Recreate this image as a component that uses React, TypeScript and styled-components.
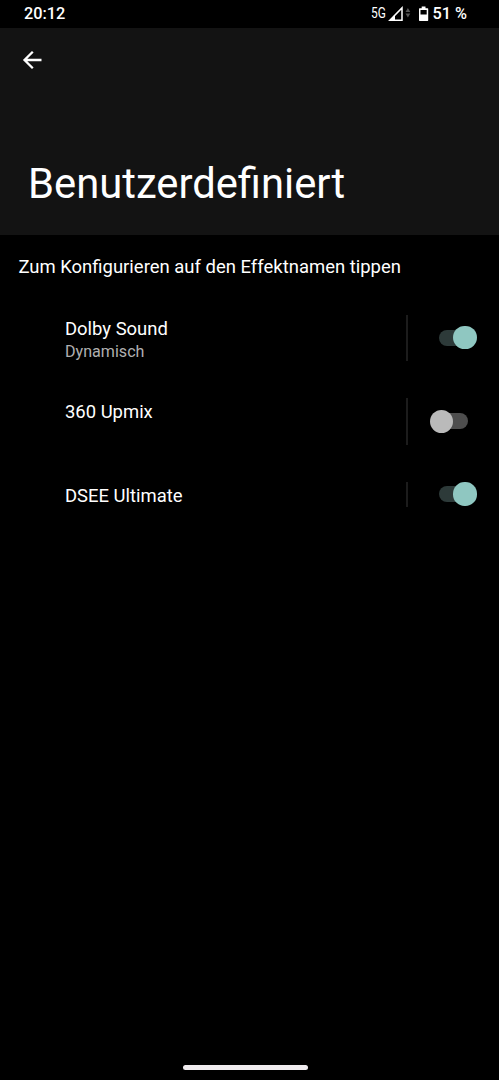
import React, { useState } from "react";
import styled, { createGlobalStyle } from "styled-components";

const GlobalStyle = createGlobalStyle`
  * { box-sizing: border-box; }
  html, body { margin: 0; background: #000; }
  body { font-family: Roboto, "Liberation Sans", sans-serif; color: #fff; }
`;

const Screen = styled.div`
  display: flex;
  flex-direction: column;
  width: 100%;
  height: 1080px;
  overflow: hidden;
  background: #000;
`;

const StatusBar = styled.div`
  display: flex;
  align-items: center;
  justify-content: space-between;
  flex: none;
  height: 27.5px;
  padding: 0 32px 0 24px;
  font-size: 16.3px;
  font-weight: 500;
  line-height: 27px;
`;

const StatusIcons = styled.div`
  display: flex;
  align-items: center;
`;

const Network = styled.span`
  font-size: 14.4px;
  font-weight: 400;
  width: 17px;
  white-space: nowrap;
  transform: scaleX(0.83);
  transform-origin: left center;
`;

const Percent = styled.span`
  margin-left: 3.5px;
`;

const Header = styled.header`
  display: flex;
  flex-direction: column;
  justify-content: space-between;
  flex: none;
  height: 207px;
  padding: 18.5px 28px 26px 18px;
  background: #131313;
`;

const BackButton = styled.button`
  display: flex;
  width: 28px;
  height: 28px;
  padding: 0;
  border: 0;
  background: none;
`;

const Title = styled.h1`
  margin: 0 0 0 10px;
  font-size: 41.75px;
  font-weight: 400;
  line-height: 50px;
  white-space: nowrap;
`;

const Hint = styled.p`
  flex: none;
  margin: 20px 18px 36px 18.4px;
  font-size: 18.48px;
  line-height: 24px;
  white-space: nowrap;
`;

const List = styled.div`
  display: flex;
  flex-direction: column;
  gap: 37px;
  flex: 1;
`;

const Row = styled.div<{ $compact?: boolean }>`
  display: flex;
  height: ${(p) => (p.$compact ? 25 : 46.5)}px;
  padding: 0 20px 0 65px;
`;

const Labels = styled.div`
  flex: 1;
  padding-top: 1px;
  white-space: nowrap;
`;

const Name = styled.div`
  font-size: 18.45px;
  line-height: 26px;
`;

const Detail = styled.div`
  font-size: 16.1px;
  line-height: 20px;
  color: #b0b0b0;
`;

const SwitchArea = styled.div`
  display: flex;
  align-items: center;
  justify-content: flex-end;
  width: 73px;
  border-left: 2px solid #1c1c1c;
`;

const Switch = styled.button<{ $on: boolean }>`
  display: flex;
  align-items: center;
  justify-content: ${(p) => (p.$on ? "flex-end" : "flex-start")};
  width: 29px;
  height: 16.4px;
  margin-right: 11.5px;
  padding: 0;
  border: 0;
  border-radius: 9px;
  background: ${(p) => (p.$on ? "#2d3a39" : "#4e4e4e")};
`;

const Thumb = styled.span<{ $on: boolean }>`
  flex: none;
  width: 23.2px;
  height: 23.2px;
  margin: 0 -9px;
  border-radius: 50%;
  background: ${(p) => (p.$on ? "#8fc7c1" : "#bababa")};
`;

const NavArea = styled.div`
  display: flex;
  justify-content: center;
  flex: none;
  height: 15.5px;
`;

const NavHandle = styled.div`
  width: 125px;
  height: 5px;
  margin-right: 8px;
  border-radius: 3px;
  background: #f0ecef;
`;

interface Effect {
  name: string;
  detail?: string;
  on: boolean;
  compact?: boolean;
}

const initialEffects: Effect[] = [
  { name: "Dolby Sound", detail: "Dynamisch", on: true },
  { name: "360 Upmix", on: false },
  { name: "DSEE Ultimate", on: true, compact: true },
];

export default function App() {
  const [effects, setEffects] = useState(initialEffects);
  const toggle = (index: number) =>
    setEffects((list) => list.map((e, i) => (i === index ? { ...e, on: !e.on } : e)));

  return (
    <Screen>
      <GlobalStyle />
      <StatusBar>
        <span>20:12</span>
        <StatusIcons>
          <Network>5G</Network>
          <svg width="17" height="16" viewBox="0 0 17 16">
            <path d="M14 1.9V14.2H1.9Z" fill="none" stroke="#fff" strokeWidth="1.5" />
            <path d="M7 9V14.9H.6Z" fill="#fff" />
          </svg>
          <svg width="12.5" height="16" viewBox="0 0 12.5 16">
            <path d="M.5 6.1L2.9 2.1L5.3 6.1ZM.5 7.4H5.3L2.9 11.4Z" fill="#555" />
          </svg>
          <svg width="11" height="16" viewBox="0 0 11 16">
            <path d="M3.7 .5h3.8v1.7h2.1q.6 0 .6.6v11.5q0 .6-.6.6h-8q-.6 0-.6-.6v-11.5q0-.6.6-.6h2.1ZM2.5 3.9v4.6h6.2v-4.6Z" fill="#fff" fillRule="evenodd" />
          </svg>
          <Percent>51 %</Percent>
        </StatusIcons>
      </StatusBar>
      <Header>
        <BackButton aria-label="Zurück">
          <svg width="28" height="28" viewBox="0 0 28 28">
            <path d="M23.5 14H6.5M14.8 5.7L6.5 14L14.8 22.3" fill="none" stroke="#fff" strokeWidth="2.3" />
          </svg>
        </BackButton>
        <Title>Benutzerdefiniert</Title>
      </Header>
      <Hint>Zum Konfigurieren auf den Effektnamen tippen</Hint>
      <List>
        {effects.map((effect, i) => (
          <Row key={effect.name} $compact={effect.compact}>
            <Labels>
              <Name>{effect.name}</Name>
              {effect.detail && <Detail>{effect.detail}</Detail>}
            </Labels>
            <SwitchArea>
              <Switch
                $on={effect.on}
                role="switch"
                aria-checked={effect.on}
                aria-label={effect.name}
                onClick={() => toggle(i)}
              >
                <Thumb $on={effect.on} />
              </Switch>
            </SwitchArea>
          </Row>
        ))}
      </List>
      <NavArea>
        <NavHandle />
      </NavArea>
    </Screen>
  );
}
